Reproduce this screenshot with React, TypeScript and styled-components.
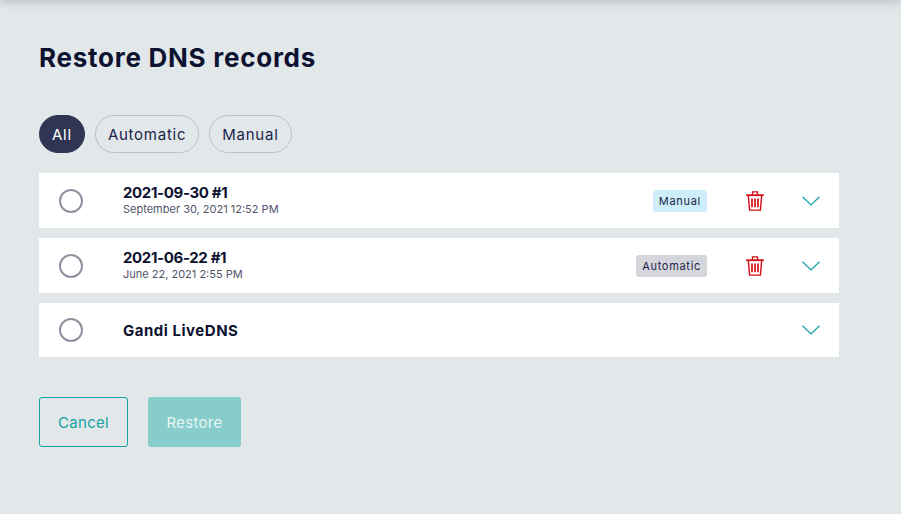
import styled, { createGlobalStyle } from "styled-components";

const GlobalStyle = createGlobalStyle`
	html, body {
		margin: 0;
		padding: 0;
		background: #e2e7ea;
	}
	body {
		font-family: "Inter", "Liberation Sans", sans-serif;
		color: #0d1230;
	}
`;

const Page = styled.div`
	position: relative;
	box-sizing: border-box;
	width: 901px;
	height: 514px;
	padding: 44px 62px 0 39px;
	overflow: hidden;
	background: #e2e7ea;

	&::before {
		content: "";
		position: absolute;
		top: -10px;
		left: 0;
		right: 0;
		height: 10px;
		box-shadow: 0 2px 10px rgba(30, 40, 60, 0.22);
	}
`;

const Title = styled.h1`
	margin: 0;
	font-weight: 700;
	font-size: 26px;
	line-height: 27px;
	letter-spacing: 0.74px;
	color: #0d1230;
`;

const Filters = styled.div`
	display: flex;
	gap: 10px;
	margin-top: 44px;
`;

const Pill = styled.button<{ $active?: boolean }>`
	box-sizing: border-box;
	height: 38px;
	padding: 0 12px;
	border-radius: 19px;
	border: 1px solid ${(p) => (p.$active ? "#2f3553" : "#bcc1c9")};
	background: ${(p) => (p.$active ? "#2f3553" : "transparent")};
	color: ${(p) => (p.$active ? "#ffffff" : "#20254a")};
	font-family: inherit;
	font-size: 15px;
	font-weight: 400;
	letter-spacing: 0.75px;
`;

const List = styled.div`
	display: flex;
	flex-direction: column;
	gap: 10px;
	margin-top: 20px;
`;

const Row = styled.div<{ $short?: boolean }>`
	display: flex;
	align-items: center;
	height: ${(p) => (p.$short ? 54 : 55)}px;
	padding: 0 19px 0 20px;
	background: #ffffff;
`;

const Radio = styled.span`
	box-sizing: border-box;
	flex: none;
	width: 24px;
	height: 24px;
	border: 2px solid #8f919f;
	border-radius: 50%;
	background: #ffffff;
`;

const Info = styled.div<{ $dated?: boolean }>`
	display: flex;
	flex-direction: column;
	flex: 1;
	gap: 2px;
	margin-left: 40px;
	padding-bottom: ${(p) => (p.$dated ? 2 : 0)}px;
`;

const Name = styled.div<{ $numeric?: boolean }>`
	font-weight: 700;
	font-size: 15px;
	line-height: 17px;
	letter-spacing: ${(p) => (p.$numeric ? "-0.35px" : "0.52px")};
	color: #0d1230;
`;

const DateText = styled.div`
	font-size: 11px;
	line-height: 13px;
	color: #50536a;
`;

const Badge = styled.span<{ $kind: "manual" | "automatic" }>`
	box-sizing: border-box;
	height: 22px;
	padding: 0 6px;
	border-radius: 3px;
	background: ${(p) => (p.$kind === "manual" ? "#cdeef8" : "#d5d6dc")};
	color: #20254a;
	font-size: 11px;
	line-height: 22px;
	letter-spacing: 0.7px;
`;

const Trash = styled.svg`
	flex: none;
	width: 18px;
	height: 20px;
	margin-left: 39px;
`;

const Chevron = styled.svg<{ $solo?: boolean }>`
	flex: none;
	width: 18px;
	height: 10px;
	margin-left: ${(p) => (p.$solo ? "0" : "38px")};
`;

const Actions = styled.div`
	display: flex;
	gap: 20px;
	margin-top: 40px;
`;

const CancelButton = styled.button`
	box-sizing: border-box;
	width: 89px;
	height: 50px;
	border: 1px solid #13a3a3;
	border-radius: 3px;
	background: transparent;
	color: #13a3a3;
	font-family: inherit;
	font-size: 15px;
	letter-spacing: 0.3px;
`;

const RestoreButton = styled.button`
	box-sizing: border-box;
	width: 93px;
	height: 50px;
	border: none;
	border-radius: 3px;
	background: #87cdcb;
	color: #e6f5f4;
	font-family: inherit;
	font-size: 15px;
	letter-spacing: 0.3px;
`;

function TrashIcon() {
	return (
		<Trash viewBox="0 0 18 20" fill="none" stroke="#d30f14" strokeWidth="1.4">
			<path d="M0.2 4.2h17.6" strokeWidth="1.8" />
			<path d="M6.5 3.8V0.9h5v2.9" />
			<path d="M2.3 4.5l1.3 14.6h10.8l1.3-14.6" />
			<path d="M6 7.5v8.8M9 7.5v8.8M12 7.5v8.8" strokeWidth="1.7" />
		</Trash>
	);
}

function ChevronIcon({ solo }: { solo?: boolean }) {
	return (
		<Chevron $solo={solo} viewBox="0 0 18 10" fill="none" stroke="#13a3a3" strokeWidth="1.2">
			<path d="M0.5 0.7L9 9L17.5 0.7" />
		</Chevron>
	);
}

export default function App() {
	return (
		<Page>
			<GlobalStyle />
			<Title>Restore DNS records</Title>
			<Filters>
				<Pill $active>All</Pill>
				<Pill>Automatic</Pill>
				<Pill>Manual</Pill>
			</Filters>
			<List>
				<Row>
					<Radio />
					<Info $dated>
						<Name $numeric>2021-09-30 #1</Name>
						<DateText>September 30, 2021 12:52 PM</DateText>
					</Info>
					<Badge $kind="manual">Manual</Badge>
					<TrashIcon />
					<ChevronIcon />
				</Row>
				<Row>
					<Radio />
					<Info $dated>
						<Name $numeric>2021-06-22 #1</Name>
						<DateText>June 22, 2021 2:55 PM</DateText>
					</Info>
					<Badge $kind="automatic">Automatic</Badge>
					<TrashIcon />
					<ChevronIcon />
				</Row>
				<Row $short>
					<Radio />
					<Info>
						<Name>Gandi LiveDNS</Name>
					</Info>
					<ChevronIcon solo />
				</Row>
			</List>
			<Actions>
				<CancelButton>Cancel</CancelButton>
				<RestoreButton>Restore</RestoreButton>
			</Actions>
		</Page>
	);
}
